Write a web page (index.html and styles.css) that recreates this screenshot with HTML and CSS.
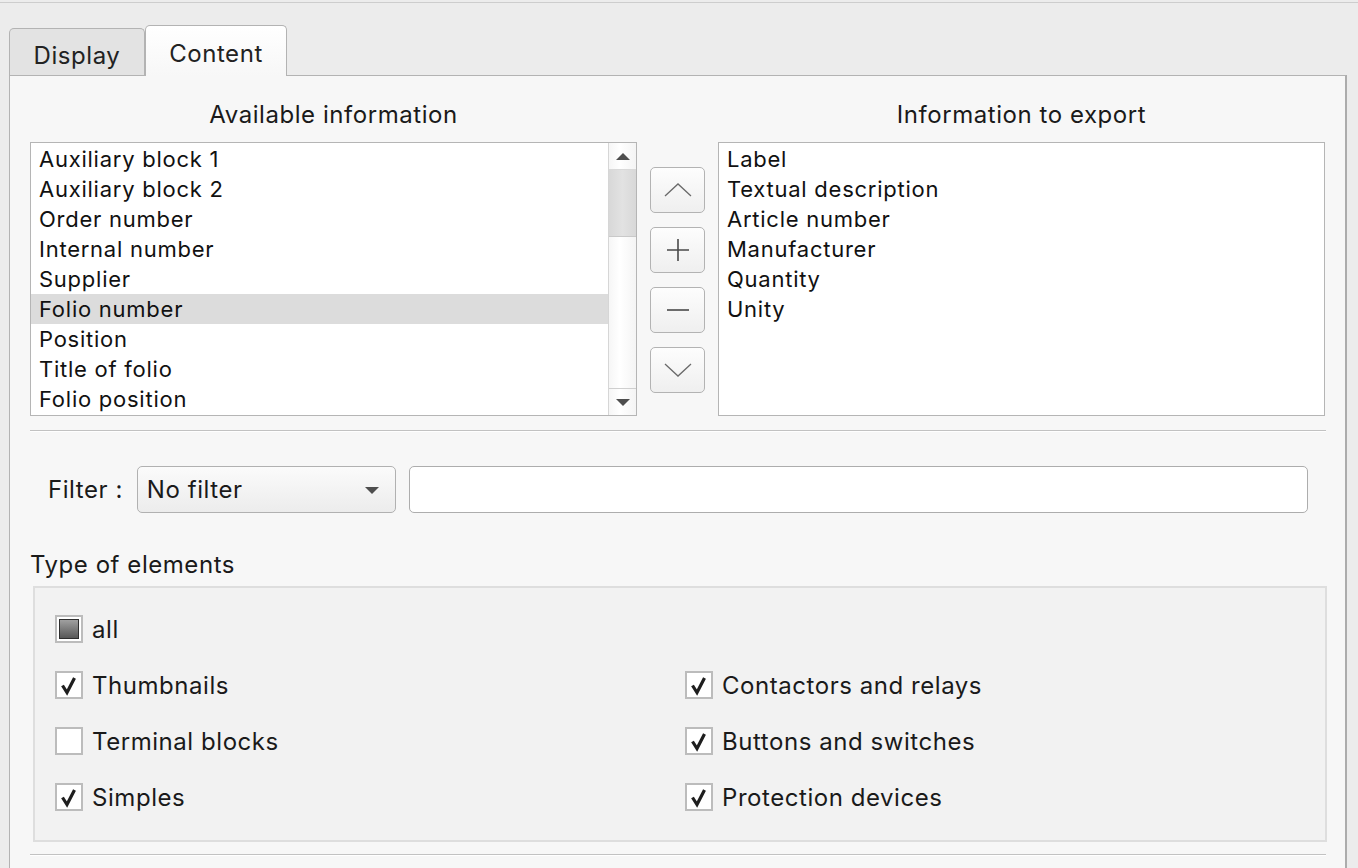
FILE: index.html
```html
<!DOCTYPE html>
<html>
<head>
<meta charset="utf-8">
<link rel="stylesheet" href="styles.css">
</head>
<body>
<div class="topline"></div>
<div class="tabwidget">
  <div class="tabbar">
    <div class="tab">Display</div>
    <div class="tab active">Content</div>
  </div>
  <div class="pane">
    <div class="transfer">
      <div class="colhead">Available information</div>
      <div></div>
      <div class="colhead">Information to export</div>

      <div class="list">
        <div class="items">
          <div class="item">Auxiliary block 1</div>
          <div class="item">Auxiliary block 2</div>
          <div class="item">Order number</div>
          <div class="item">Internal number</div>
          <div class="item">Supplier</div>
          <div class="item selected">Folio number</div>
          <div class="item">Position</div>
          <div class="item">Title of folio</div>
          <div class="item">Folio position</div>
        </div>
        <div class="scrollbar">
          <div class="sb-btn sb-up"><span class="tri-up"></span></div>
          <div class="sb-thumb"></div>
          <div class="sb-track"></div>
          <div class="sb-btn sb-down"><span class="tri-down"></span></div>
        </div>
      </div>

      <div class="buttons">
        <div class="btn"><svg width="30" height="16" viewBox="0 0 30 16"><polyline points="2,14 15,2 28,14" fill="none" stroke="#6a6a6a" stroke-width="1.3"/></svg></div>
        <div class="btn"><svg width="24" height="24" viewBox="0 0 24 24"><path d="M12 1V23M1 12H23" stroke="#4a4a4a" stroke-width="1.6" fill="none"/></svg></div>
        <div class="btn"><svg width="24" height="24" viewBox="0 0 24 24"><path d="M1 12H23" stroke="#4a4a4a" stroke-width="1.6" fill="none"/></svg></div>
        <div class="btn"><svg width="30" height="16" viewBox="0 0 30 16"><polyline points="2,2 15,14 28,2" fill="none" stroke="#6a6a6a" stroke-width="1.3"/></svg></div>
      </div>

      <div class="list plain">
        <div class="items">
          <div class="item">Label</div>
          <div class="item">Textual description</div>
          <div class="item">Article number</div>
          <div class="item">Manufacturer</div>
          <div class="item">Quantity</div>
          <div class="item">Unity</div>
        </div>
      </div>
    </div>

    <div class="sep"></div>

    <div class="filter">
      <span class="filter-label">Filter :</span>
      <div class="combo"><span>No filter</span><span class="tri-down combo-arrow"></span></div>
      <div class="textfield"></div>
    </div>

    <div class="section-title">Type of elements</div>
    <div class="group">
      <div class="check-row full">
        <span class="cb partial"><span class="cb-fill"></span></span><span>all</span>
      </div>
      <div class="check-grid">
        <div class="check-row"><span class="cb"><svg width="24" height="24" viewBox="0 0 24 24"><path d="M5.5 12.5L10 19.5L17.5 5" fill="none" stroke="#1e1e1e" stroke-width="3.2"/></svg></span><span>Thumbnails</span></div>
        <div class="check-row"><span class="cb"><svg width="24" height="24" viewBox="0 0 24 24"><path d="M5.5 12.5L10 19.5L17.5 5" fill="none" stroke="#1e1e1e" stroke-width="3.2"/></svg></span><span>Contactors and relays</span></div>
        <div class="check-row"><span class="cb"></span><span>Terminal blocks</span></div>
        <div class="check-row"><span class="cb"><svg width="24" height="24" viewBox="0 0 24 24"><path d="M5.5 12.5L10 19.5L17.5 5" fill="none" stroke="#1e1e1e" stroke-width="3.2"/></svg></span><span>Buttons and switches</span></div>
        <div class="check-row"><span class="cb"><svg width="24" height="24" viewBox="0 0 24 24"><path d="M5.5 12.5L10 19.5L17.5 5" fill="none" stroke="#1e1e1e" stroke-width="3.2"/></svg></span><span>Simples</span></div>
        <div class="check-row"><span class="cb"><svg width="24" height="24" viewBox="0 0 24 24"><path d="M5.5 12.5L10 19.5L17.5 5" fill="none" stroke="#1e1e1e" stroke-width="3.2"/></svg></span><span>Protection devices</span></div>
      </div>
    </div>
    <div class="sep bottom"></div>
  </div>
</div>
</body>
</html>
```
FILE: styles.css
```css
* { box-sizing: border-box; }
html, body { margin: 0; padding: 0; }
body {
  background: #ececec;
  font-family: Inter, "Liberation Sans", sans-serif;
  font-size: 24px;
  letter-spacing: 0.55px;
  color: #1a1a1a;
  width: 1358px;
  height: 868px;
  overflow: hidden;
}
.topline {
  height: 3px;
  border-bottom: 1px solid #cdcdcd;
}
.tabwidget {
  margin-left: 9px;
  margin-top: 21px;
  width: 1338px;
}
.tabbar {
  display: flex;
  align-items: flex-end;
  height: 51px;
}
.tab {
  width: 136px;
  height: 47px;
  border: 1px solid #b3b3b3;
  border-bottom: none;
  border-radius: 5px 5px 0 0;
  background: #e3e3e3;
  display: flex;
  align-items: center;
  justify-content: center;
  font-size: 24px;
  color: #222;
  padding-top: 6px;
}
.tab.active {
  width: 142px;
  height: 51px;
  background: linear-gradient(#ffffff, #f7f7f7);
  margin-bottom: -1px;
  position: relative;
  padding-top: 4px;
}
.pane {
  background: #f7f7f7;
  border: 1px solid #b3b3b3;
  border-right: 2px solid #acacac;
  border-bottom: none;
  height: 800px;
  padding: 24px 19px 0 20px;
}
.transfer {
  display: grid;
  grid-template-columns: 607px 81px 607px;
  grid-template-rows: 30px 274px;
  row-gap: 12px;
}
.colhead {
  text-align: center;
  line-height: 30px;
}
.list {
  background: #ffffff;
  border: 1px solid #b5b5b5;
  display: flex;
}
.items {
  flex: 1;
  padding-top: 1px;
  font-size: 22px;
  letter-spacing: 0.75px;
  color: #111;
}
.item {
  height: 30px;
  line-height: 30px;
  padding-left: 8px;
  white-space: nowrap;
}
.item.selected { background: #dcdcdc; }
.scrollbar {
  width: 28px;
  border-left: 1px solid #d6d6d6;
  display: flex;
  flex-direction: column;
  background: linear-gradient(90deg, #f6f6f6, #ffffff 40%, #f4f4f4);
}
.sb-btn {
  height: 27px;
  display: flex;
  align-items: center;
  justify-content: center;
}
.sb-up { border-bottom: 1px solid #d9d9d9; }
.sb-down { border-top: 1px solid #cfcfcf; }
.sb-thumb {
  height: 67px;
  background: linear-gradient(90deg, #d8d8d8, #e2e2e2 50%, #d8d8d8);
  border-bottom: 1px solid #c9c9c9;
}
.sb-track { flex: 1; }
.tri-up {
  width: 0; height: 0;
  border-left: 7px solid transparent;
  border-right: 7px solid transparent;
  border-bottom: 7px solid #4e4e4e;
}
.tri-down {
  width: 0; height: 0;
  border-left: 7px solid transparent;
  border-right: 7px solid transparent;
  border-top: 7px solid #4e4e4e;
}
.buttons {
  display: flex;
  flex-direction: column;
  align-items: center;
  padding-top: 25px;
  gap: 14px;
}
.btn {
  width: 55px;
  height: 46px;
  border: 1px solid #b3b3b3;
  border-radius: 5px;
  background: linear-gradient(#fdfdfd, #efefef);
  display: flex;
  align-items: center;
  justify-content: center;
}
.sep {
  margin-top: 14px;
  height: 2px;
  border-top: 1px solid #c2c2c2;
  border-bottom: 1px solid #ffffff;
}
.sep.bottom { margin-top: 12px; }
.filter {
  display: flex;
  align-items: center;
  margin-top: 34px;
  padding: 0 18px;
  height: 47px;
}
.filter-label { margin-right: 14px; white-space: nowrap; }
.combo {
  flex: none;
  width: 259px;
  height: 47px;
  border: 1px solid #b1b1b1;
  border-radius: 5px;
  background: linear-gradient(#fbfbfb, #ececec);
  display: flex;
  align-items: center;
  justify-content: space-between;
  padding: 0 16px 0 9px;
}
.combo-arrow { margin-top: 2px; }
.textfield {
  flex: 1;
  height: 47px;
  margin-left: 13px;
  background: #ffffff;
  border: 1px solid #adadad;
  border-radius: 5px;
}
.section-title {
  margin-top: 37px;
  margin-left: 0;
  line-height: 30px;
}
.group {
  margin-left: 3px;
  margin-right: -1px;
  margin-top: 6px;
  height: 256px;
  background: #f2f2f2;
  border: 2px solid #dedede;
  padding: 27px 0 0 20px;
}
.check-grid {
  display: grid;
  grid-template-columns: 630px 1fr;
  row-gap: 28px;
  margin-top: 28px;
}
.check-row {
  display: flex;
  align-items: center;
  height: 28px;
  white-space: nowrap;
}
.cb {
  width: 28px;
  height: 28px;
  border: 2px solid #bcbcbc;
  background: #ffffff;
  margin-right: 9px;
  display: flex;
  align-items: center;
  justify-content: center;
  flex: none;
}
.cb-fill {
  width: 20px;
  height: 20px;
  border: 1px solid #2e2e2e;
  background: linear-gradient(#a0a0a0, #575757);
}
```
